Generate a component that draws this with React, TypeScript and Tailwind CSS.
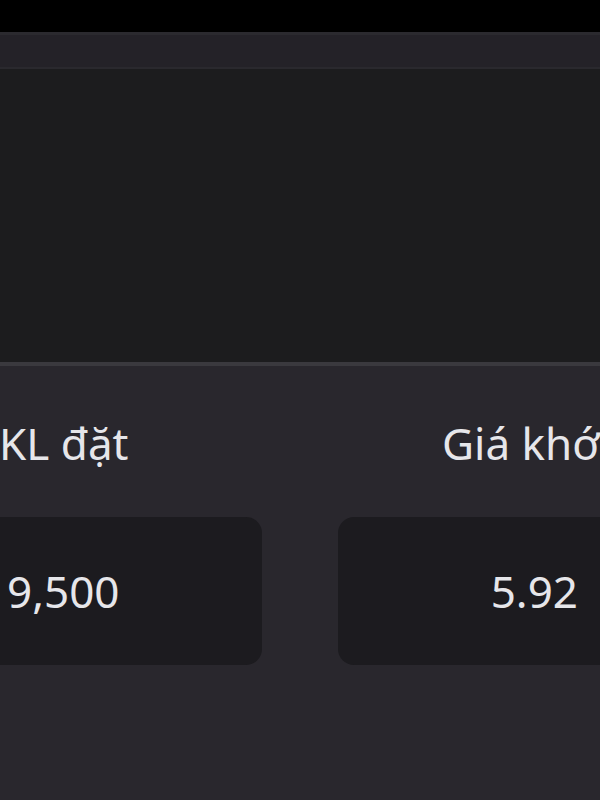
export default function App() {
  return (
    <div className="w-[600px] h-[800px] overflow-hidden flex flex-col bg-[#29272d]" style={{ fontFamily: '"Noto Sans", "Open Sans", sans-serif' }}>
      <div className="h-[32px] bg-black shrink-0" />
      <div className="h-[37px] shrink-0 bg-[#242228] border-t-[3px] border-b-[2px] border-t-[#2b2a2f] border-b-[#2a292e]" />
      <div className="h-[293px] shrink-0 bg-[#1c1c1e]" />
      <div className="h-[4px] shrink-0 bg-[#3a393e]" />
      <div className="flex-1 flex gap-[76px] -ml-[38px] pt-[47px]">
        <div className="w-[300px] shrink-0 flex flex-col">
          <div className="pl-[37px] text-[44px] leading-[60px] text-[#e6e6ea] whitespace-nowrap">KL đặt</div>
          <div className="mt-[44px] h-[148px] rounded-[16px] bg-[#1c1b1f] flex items-center pl-[45px]">
            <span className="text-[44px] leading-[60px] text-[#e6e6ea]">9,500</span>
          </div>
        </div>
        <div className="w-[300px] shrink-0 flex flex-col">
          <div className="pl-[104px] text-[44px] leading-[60px] text-[#e6e6ea] whitespace-nowrap">Giá khớp</div>
          <div className="mt-[44px] h-[148px] rounded-[16px] bg-[#1c1b1f] flex items-center justify-end pr-[60px]">
            <span className="text-[44px] leading-[60px] text-[#e6e6ea]">5.92</span>
          </div>
        </div>
      </div>
    </div>
  );
}
